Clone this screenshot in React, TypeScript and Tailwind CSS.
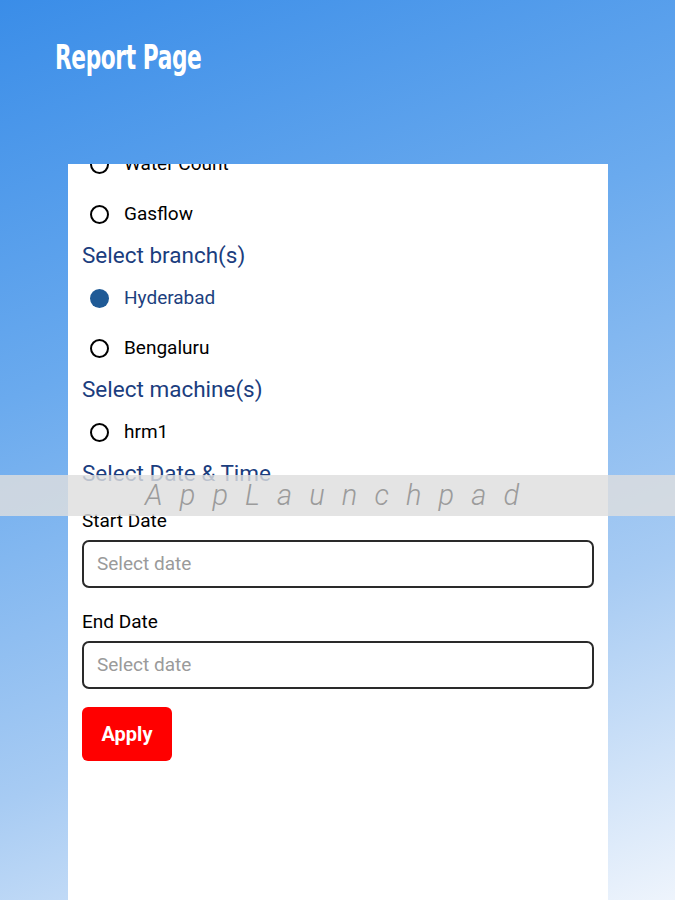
const radioFont = { fontFamily: "Roboto, 'Liberation Sans', sans-serif" };

type RadioRowProps = {
  label: string;
  checked?: boolean;
};

function RadioRow({ label, checked = false }: RadioRowProps) {
  return (
    <div className="flex h-[50px] items-center gap-[15px] pl-[8px]">
      {checked ? (
        <span className="block h-[19px] w-[19px] rounded-full bg-[#1f5a96]" />
      ) : (
        <span className="block h-[19px] w-[19px] rounded-full border-[2.5px] border-black" />
      )}
      <span
        className={`text-[19px] ${checked ? "text-[#1d3f7e]" : "text-black"}`}
      >
        {label}
      </span>
    </div>
  );
}

function SectionHeading({ children }: { children: string }) {
  return (
    <div className="flex h-[34px] items-center text-[22.5px] text-[#1b3d7e]">
      {children}
    </div>
  );
}

function DateField({ label }: { label: string }) {
  return (
    <div className="flex flex-col gap-[7px]">
      <span className="h-[24px] text-[19px] leading-[24px] text-black">
        {label}
      </span>
      <div className="flex h-[48px] items-center rounded-[7px] border-2 border-[#2a2a2a] px-[13px] text-[19px] text-[#9a9a9a]">
        Select date
      </div>
    </div>
  );
}

export default function App() {
  return (
    <div
      className="relative flex h-[900px] flex-col overflow-hidden bg-[linear-gradient(160deg,#3a8de8_0%,#6aaaee_35%,#a7cbf3_70%,#eef4fc_100%)]"
      style={radioFont}
    >
      <header className="h-[164px] pl-[55px] pt-[33px]">
        <h1
          className="origin-left scale-x-[0.73] text-[33px] font-black tracking-[-0.5px] text-white"
          style={{ fontFamily: "'DejaVu Sans Condensed', 'DejaVu Sans', sans-serif" }}
        >
          Report Page
        </h1>
      </header>

      <main className="ml-[68px] w-[540px] flex-1 overflow-hidden bg-white">
        <div className="-mt-[25px] px-[14px]">
          <RadioRow label="Water Count" />
          <RadioRow label="Gasflow" />
          <SectionHeading>Select branch(s)</SectionHeading>
          <RadioRow label="Hyderabad" checked />
          <RadioRow label="Bengaluru" />
          <SectionHeading>Select machine(s)</SectionHeading>
          <RadioRow label="hrm1" />
          <SectionHeading>Select Date & Time</SectionHeading>
          <div className="mt-[18px] flex flex-col gap-[22px]">
            <DateField label="Start Date" />
            <DateField label="End Date" />
          </div>
          <button className="mt-[18px] h-[54px] w-[90px] rounded-[6px] bg-[#ff0000] text-[20px] font-bold text-white">
            Apply
          </button>
        </div>
      </main>

      <div className="absolute left-0 right-0 top-[475px] flex h-[41px] items-center bg-[rgba(222,222,222,0.82)] pl-[145px]">
        <span className="text-[29px] font-light italic tracking-[0.59em] text-[#9b9b9b]">
          AppLaunchpad
        </span>
      </div>
    </div>
  );
}
